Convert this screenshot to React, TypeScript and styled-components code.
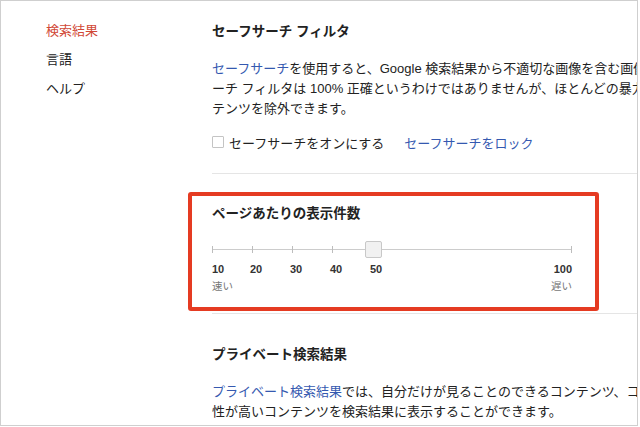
import React from 'react';
import styled, { createGlobalStyle } from 'styled-components';

const GlobalStyle = createGlobalStyle`
  html, body {
    margin: 0;
    padding: 0;
    background: #ffffff;
  }
  body {
    font-family: "Liberation Sans", Arial, "Noto Sans CJK JP", sans-serif;
    color: #222222;
    overflow: hidden;
  }
`;

const Frame = styled.div`
  width: 638px;
  height: 426px;
  box-sizing: border-box;
  border: 1px solid #cfcfcf;
  display: flex;
  overflow: hidden;
  background: #ffffff;
`;

const Sidebar = styled.ul`
  list-style: none;
  margin: 0;
  padding: 15px 0 0 45px;
  width: 211px;
  box-sizing: border-box;
  flex-shrink: 0;
`;

const NavItem = styled.li<{ $active?: boolean }>`
  font-size: 13px;
  line-height: 29px;
  color: ${(p) => (p.$active ? '#d14836' : '#222222')};
  cursor: pointer;
`;

const Main = styled.div`
  flex: 1;
  min-width: 0;
  padding-top: 21px;
`;

const Section = styled.section<{ $top: number; $bottom: number; $divider?: boolean }>`
  position: relative;
  padding: ${(p) => p.$top}px 0 ${(p) => p.$bottom}px 0;
  border-bottom: ${(p) => (p.$divider ? '1px solid #e5e5e5' : 'none')};
`;

const Title = styled.h2`
  margin: 0;
  font-size: 13.5px;
  line-height: 20px;
  font-weight: bold;
  color: #222222;
  white-space: nowrap;
`;

const Paragraph = styled.div`
  margin-top: 17px;
  font-size: 13px;
  line-height: 20px;
  color: #222222;
`;

const Line = styled.div`
  white-space: nowrap;
`;

const Link = styled.a`
  color: #3559b0;
  text-decoration: none;
  cursor: pointer;
`;

const CheckRow = styled.div`
  margin-top: 13px;
  display: flex;
  align-items: center;
  height: 20px;
  font-size: 13px;
  white-space: nowrap;
`;

const CheckBox = styled.span`
  width: 12px;
  height: 12px;
  box-sizing: border-box;
  border: 1px solid #c4c4c4;
  border-radius: 1px;
  background: #ffffff;
  margin-right: 5px;
`;

const CheckLabel = styled.span`
  margin-right: 20px;
`;

const Highlight = styled.div`
  position: absolute;
  left: -24px;
  top: 18px;
  width: 411px;
  height: 119px;
  box-sizing: border-box;
  border: 4px solid #e53b22;
  border-radius: 3px;
  pointer-events: none;
`;

const SliderWrap = styled.div`
  width: 360px;
  margin-top: 17px;
`;

const Track = styled.div`
  position: relative;
  height: 17px;

  &::before {
    content: '';
    position: absolute;
    left: 0;
    right: 0;
    top: 8px;
    height: 1px;
    background: #cccccc;
  }
`;

const Tick = styled.span`
  position: absolute;
  top: 5px;
  width: 1px;
  height: 7px;
  background: #bdbdbd;
`;

const Thumb = styled.span`
  position: absolute;
  top: 0;
  width: 17px;
  height: 17px;
  box-sizing: border-box;
  margin-left: -8px;
  background: #f1f1f1;
  border: 1px solid #c8c8c8;
  border-radius: 2px;
`;

const ValueRow = styled.div`
  position: relative;
  height: 14px;
  margin-top: 4px;
`;

const Value = styled.span`
  position: absolute;
  top: 0;
  font-size: 11px;
  line-height: 14px;
  font-weight: bold;
  color: #333333;
`;

const SpeedRow = styled.div`
  margin-top: 3px;
  display: flex;
  justify-content: space-between;
  font-size: 10.5px;
  line-height: 14px;
  color: #777777;
`;

const values = [10, 20, 30, 40, 50, 100];
const current = 50;
const pos = (v: number) => ((v - 10) / 90) * 360;

const App = () => {
  return (
    <>
      <GlobalStyle />
      <Frame>
        <Sidebar>
          <NavItem $active>検索結果</NavItem>
          <NavItem>言語</NavItem>
          <NavItem>ヘルプ</NavItem>
        </Sidebar>
        <Main>
          <Section $top={0} $bottom={21} $divider>
            <Title>セーフサーチ フィルタ</Title>
            <Paragraph>
              <Line>
                <Link>セーフサーチ</Link>を使用すると、Google 検索結果から不適切な画像を含む画像を除外できます。セーフサ
              </Line>
              <Line>ーチ フィルタは 100% 正確というわけではありませんが、ほとんどの暴力的なアダルト コン</Line>
              <Line>テンツを除外できます。</Line>
            </Paragraph>
            <CheckRow>
              <CheckBox />
              <CheckLabel>セーフサーチをオンにする</CheckLabel>
              <Link>セーフサーチをロック</Link>
            </CheckRow>
          </Section>

          <Section $top={30} $bottom={20} $divider>
            <Title>ページあたりの表示件数</Title>
            <SliderWrap>
              <Track>
                {values.map((v) => (
                  <Tick key={v} style={{ left: Math.min(pos(v), 359) }} />
                ))}
                <Thumb style={{ left: pos(current) + 1 }} />
              </Track>
              <ValueRow>
                {values.map((v, i) =>
                  i === values.length - 1 ? (
                    <Value key={v} style={{ right: 0 }}>
                      {v}
                    </Value>
                  ) : (
                    <Value key={v} style={{ left: i === 0 ? 0 : pos(v) - 2 }}>
                      {v}
                    </Value>
                  )
                )}
              </ValueRow>
              <SpeedRow>
                <span>速い</span>
                <span>遅い</span>
              </SpeedRow>
            </SliderWrap>
            <Highlight />
          </Section>

          <Section $top={31} $bottom={0}>
            <Title>プライベート検索結果</Title>
            <Paragraph>
              <Line>
                <Link>プライベート検索結果</Link>では、自分だけが見ることのできるコンテンツ、コンテンツを共有している相手などから関連
              </Line>
              <Line>性が高いコンテンツを検索結果に表示することができます。</Line>
            </Paragraph>
          </Section>
        </Main>
      </Frame>
    </>
  );
};

export default App;
